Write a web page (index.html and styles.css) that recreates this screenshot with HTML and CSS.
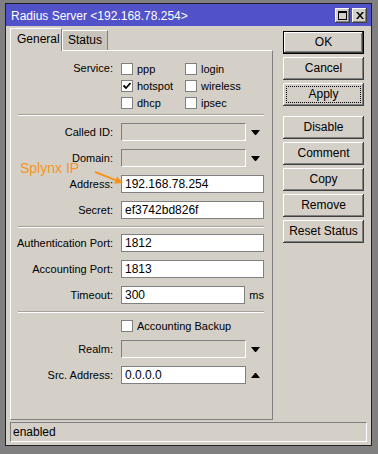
FILE: index.html
```html
<!DOCTYPE html>
<html lang="en">
<head>
  <meta charset="UTF-8">
  <title>Radius Server</title>
  <link rel="stylesheet" href="styles.css">
</head>
<body>
  <div class="window">
    <div class="titlebar">
      <span class="title">Radius Server &lt;192.168.78.254&gt;</span>
      <div class="title-buttons">
        <span class="tbtn">
          <svg width="9" height="9" viewBox="0 0 9 9"><rect x="0.5" y="0.5" width="8" height="8" fill="none" stroke="#000"/><rect x="0" y="0" width="9" height="2" fill="#000"/></svg>
        </span>
        <span class="tbtn">
          <svg width="8" height="7" viewBox="0 0 8 7"><path d="M0 0h2l2 2.5 2-2.5h2l-3 3.5 3 3.5h-2l-2-2.5-2 2.5h-2l3-3.5z" fill="#000"/></svg>
        </span>
      </div>
    </div>

    <div class="content">
      <div class="main">
        <div class="tabs">
          <div class="tab active">General</div>
          <div class="tab">Status</div>
        </div>

        <div class="panel">
          <!-- Service checkboxes -->
          <div class="services">
            <div class="label">Service:</div>
            <div class="checks">
              <div class="check"><span class="box"></span>ppp</div>
              <div class="check"><span class="box"></span>login</div>
              <div class="check"><span class="box"><svg width="10" height="10" viewBox="0 0 10 10"><path d="M1.5 4.5l2.5 2.5 4.5-5" fill="none" stroke="#000" stroke-width="1.8"/></svg></span>hotspot</div>
              <div class="check"><span class="box"></span>wireless</div>
              <div class="check"><span class="box"></span>dhcp</div>
              <div class="check"><span class="box"></span>ipsec</div>
            </div>
          </div>

          <div class="sep"></div>

          <div class="rows">
            <div class="row">
              <div class="label">Called ID:</div>
              <div class="field short disabled"></div>
              <span class="arrow down"></span>
            </div>
            <div class="row">
              <div class="label">Domain:</div>
              <div class="field short disabled"></div>
              <span class="arrow down"></span>
            </div>
            <div class="row">
              <div class="label">Address:</div>
              <div class="field">192.168.78.254</div>
            </div>
            <div class="row">
              <div class="label">Secret:</div>
              <div class="field">ef3742bd826f</div>
            </div>
          </div>

          <div class="sep sep-lower"></div>

          <div class="rows">
            <div class="row">
              <div class="label">Authentication Port:</div>
              <div class="field">1812</div>
            </div>
            <div class="row">
              <div class="label">Accounting Port:</div>
              <div class="field">1813</div>
            </div>
            <div class="row">
              <div class="label">Timeout:</div>
              <div class="field short">300</div>
              <span class="unit">ms</span>
            </div>
          </div>

          <div class="sep sep-lower"></div>

          <div class="check single"><span class="box"></span>Accounting Backup</div>

          <div class="rows">
            <div class="row">
              <div class="label">Realm:</div>
              <div class="field short disabled"></div>
              <span class="arrow down"></span>
            </div>
            <div class="row">
              <div class="label">Src. Address:</div>
              <div class="field short">0.0.0.0</div>
              <span class="arrow up"></span>
            </div>
          </div>

          <!-- annotation -->
          <div class="note">Splynx IP</div>
          <svg class="note-arrow" width="36" height="20" viewBox="0 0 36 20">
            <line x1="5" y1="5" x2="27" y2="13.6" stroke="#f7941d" stroke-width="2"/>
            <polygon points="33,16 24.1,16.8 27.1,9.4" fill="#f7941d"/>
          </svg>
        </div>
      </div>

      <div class="buttons">
        <div class="btn default">OK</div>
        <div class="btn">Cancel</div>
        <div class="btn focus"><span>Apply</span></div>
        <div class="btn spaced">Disable</div>
        <div class="btn">Comment</div>
        <div class="btn">Copy</div>
        <div class="btn">Remove</div>
        <div class="btn">Reset Status</div>
      </div>
    </div>

    <div class="statusbar">enabled</div>
  </div>
</body>
</html>
```

FILE: styles.css
```css
/* General */
body {
  margin: 0;
  background-color: #808080;
  font-family: "Liberation Sans", Arial, sans-serif;
  font-size: 11px;
  color: #000;
}

.window {
  box-sizing: border-box;
  width: 367px;
  height: 443px;
  margin: 3px 0 0 5px;
  border: 1px solid #202020;
  background-color: #d4d0c8;
}

/* Title bar */
.titlebar {
  height: 22px;
  background-color: #5151c9;
  display: flex;
  align-items: center;
  justify-content: space-between;
  padding: 0 4px 0 5px;
}

.title {
  color: #fff;
  font-size: 12px;
  padding-top: 1px;
}

.title-buttons {
  display: flex;
  gap: 2px;
}

.tbtn {
  box-sizing: border-box;
  width: 15px;
  height: 15px;
  background-color: #d4d0c8;
  box-shadow: inset -1px -1px #404040, inset 1px 1px #fff, inset -2px -2px #808080;
  display: flex;
  align-items: center;
  justify-content: center;
}

/* Content */
.content {
  display: flex;
  padding: 2px 0 0 4px;
}

.main {
  width: 263px;
}

.tabs {
  display: flex;
  align-items: flex-end;
  height: 22px;
}

.tab {
  box-sizing: border-box;
  height: 20px;
  padding: 0 5px;
  line-height: 18px;
  font-size: 12px;
  border-top: 1px solid #fff;
  border-left: 1px solid #fff;
  border-right: 1px solid #808080;
  background-color: #c8c4bc;
}

.tab.active {
  height: 23px;
  width: 52px;
  margin-bottom: -1px;
  padding-left: 6px;
  line-height: 20px;
  background-color: #d4d0c8;
  position: relative;
  z-index: 1;
}

.panel {
  position: relative;
  box-sizing: border-box;
  height: 370px;
  padding: 0 8px 0 7px;
  border-top: 1px solid #fff;
  border-left: 1px solid #fff;
  border-right: 1px solid #808080;
  border-bottom: 1px solid #808080;
}

.label {
  width: 95px;
  margin-right: 8px;
  flex-shrink: 0;
  display: flex;
  justify-content: flex-end;
  white-space: nowrap;
}

/* Checkboxes */
.services {
  display: flex;
  padding-top: 9px;
}

.services .label {
  line-height: 17px;
}

.checks {
  display: grid;
  grid-template-columns: 64px 64px;
  grid-auto-rows: 17px;
}

.check {
  display: flex;
  align-items: center;
  gap: 4px;
}

.box {
  box-sizing: border-box;
  width: 12px;
  height: 12px;
  background-color: #fff;
  border: 1px solid #808080;
  display: flex;
  align-items: center;
  justify-content: center;
}

.check.single {
  height: 13px;
  padding-left: 103px;
  margin-bottom: 8px;
}

/* Separators */
.sep {
  height: 0;
  border-top: 1px solid #a7a39c;
  border-bottom: 1px solid #fff;
  margin: 3px 0 7px;
}

.sep.sep-lower {
  margin: 7px 0 6px;
}

/* Field rows */
.rows {
  display: flex;
  flex-direction: column;
  gap: 8px;
}

.row {
  display: flex;
  align-items: center;
  height: 18px;
}

.field {
  box-sizing: border-box;
  width: 143px;
  height: 18px;
  padding-left: 3px;
  line-height: 16px;
  font-size: 12px;
  background-color: #fff;
  border: 1px solid #808080;
}

.field.short {
  width: 125px;
}

.field.disabled {
  background-color: #d4d0c8;
  border-right-color: #fff;
  border-bottom-color: #fff;
}

.unit {
  margin-left: 4px;
}

.arrow {
  width: 1px;
  height: 0;
  margin-left: 5px;
  border-left: 4px solid transparent;
  border-right: 4px solid transparent;
}

.arrow.down {
  border-top: 5px solid #000;
}

.arrow.up {
  border-bottom: 5px solid #000;
}

/* Annotation */
.note {
  position: absolute;
  left: 9px;
  top: 109px;
  color: #f7941d;
  font-size: 14px;
  line-height: 16px;
}

.note-arrow {
  position: absolute;
  left: 79px;
  top: 116px;
}

/* Buttons */
.buttons {
  width: 81px;
  margin: 3px 0 0 10px;
  display: flex;
  flex-direction: column;
  gap: 3px;
}

.btn {
  box-sizing: border-box;
  height: 23px;
  line-height: 23px;
  text-align: center;
  font-size: 12px;
  box-shadow: inset -1px -1px #404040, inset 1px 1px #fff, inset -2px -2px #808080;
}

.btn.default {
  border: 1px solid #000;
  line-height: 21px;
}

.btn.focus {
  padding: 3px;
  line-height: 15px;
}

.btn.focus span {
  display: block;
  border: 1px dotted #000;
}

.btn.spaced {
  margin-top: 7px;
}

/* Status bar */
.statusbar {
  box-sizing: border-box;
  height: 20px;
  margin: 2px 4px 0 4px;
  padding-left: 2px;
  line-height: 18px;
  font-size: 12px;
  border-top: 1px solid #808080;
  border-left: 1px solid #808080;
  border-right: 1px solid #fff;
  border-bottom: 1px solid #fff;
}
```
